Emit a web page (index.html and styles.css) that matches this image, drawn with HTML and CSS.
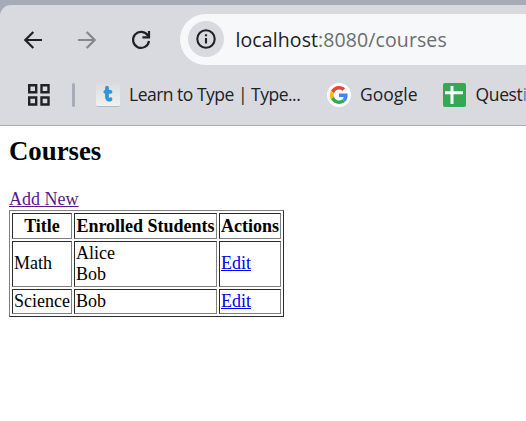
FILE: index.html
```html
<!DOCTYPE html>
<html lang="en">
<head>
<meta charset="utf-8">
<title>Courses</title>
<link rel="stylesheet" href="styles.css">
</head>
<body>
<header class="browser">
  <div class="toolbar">
    <svg class="nav back" viewBox="0 0 18 18"><path d="M18 9H1.5M9.3 1 1.3 9l8 8"/></svg>
    <svg class="nav forward" viewBox="0 0 18 18"><path d="M0 9h16.5M8.7 1l8 8-8 8"/></svg>
    <svg class="nav reload" viewBox="0 0 18 18"><path d="M15.9 4.7A8 8 0 1 0 17 10M17 0v6.3h-6.6"/></svg>
    <div class="address">
      <span class="info"><svg viewBox="0 0 20 20"><circle cx="10" cy="10" r="8.7"/><path d="M10 9v5.5M10 5.3v2"/></svg></span>
      <span class="url">localhost<span class="path">:8080/courses</span></span>
    </div>
  </div>
  <nav class="bookmarks">
    <svg class="apps" viewBox="0 0 22 22"><path d="M1.2 1.2h7v7h-7zM13.5 1.2h7v7h-7zM1.2 13.5h7v7h-7zM13.5 13.5h7v7h-7z"/></svg>
    <span class="divider"></span>
    <span class="typing"><svg viewBox="0 0 24 24"><path d="M11 4.7v9.6q0 3 3.5 2M9.3 8.8h5.2"/></svg></span>
    <span class="label learn">Learn to Type | Type...</span>
    <span class="google"><svg viewBox="0 0 48 48"><path fill="#ea4335" d="M24 9.5c3.5 0 6.7 1.2 9.2 3.6l6.9-6.9C35.9 2.4 30.5 0 24 0 14.6 0 6.5 5.4 2.6 13.2l8 6.2C12.4 13.7 17.7 9.5 24 9.5z"/><path fill="#4285f4" d="M47 24.6c0-1.6-.2-3.1-.4-4.6H24v9h12.9c-.6 3-2.2 5.5-4.7 7.2l7.7 6C44.4 38 47 31.8 47 24.6z"/><path fill="#fbbc05" d="M10.5 28.6a14.5 14.5 0 0 1 0-9.2l-8-6.2a24 24 0 0 0 0 21.6z"/><path fill="#34a853" d="M24 48c6.5 0 11.9-2.1 15.9-5.8l-7.7-6A14.5 14.5 0 0 1 10.5 28.6l-8 6.2C6.5 42.6 14.6 48 24 48z"/></svg></span>
    <span class="label goog">Google</span>
    <svg class="sheet" viewBox="0 0 23 24"><rect width="23" height="24" rx="2" fill="#34a853"/><path d="M9 3v18M2 9.8h18" stroke="#fff" stroke-width="3"/></svg>
    <span class="label quest">Quest<span class="edge">i</span></span>
  </nav>
</header>
<main>
  <h1>Courses</h1>
  <a class="visited" href="#">Add New</a>
  <table>
    <colgroup><col class="c1"><col class="c2"><col class="c3"></colgroup>
    <tr class="head"><th>Title</th><th>Enrolled Students</th><th>Actions</th></tr>
    <tr class="double"><td>Math</td><td>Alice<br>Bob</td><td><a href="#">Edit</a></td></tr>
    <tr class="single"><td>Science</td><td>Bob</td><td><a href="#">Edit</a></td></tr>
  </table>
</main>
</body>
</html>
```
FILE: styles.css
```css
* { box-sizing: border-box; }
body { margin: 0; width: 526px; height: 421px; overflow: hidden; background: #fff; }
svg { display: block; flex: none; }
.browser {
  height: 126px;
  padding-top: 5px;
  background: linear-gradient(#a6abb8 20px, #d9dae0 20px);
  border-bottom: 1px solid #aeafb6;
  font-family: "Open Sans", "Noto Sans", sans-serif;
  color: #202124;
}
.toolbar {
  display: flex;
  align-items: center;
  height: 70px;
  padding-left: 24px;
  background: #d9dae0;
  border-top-left-radius: 11px;
}
.nav { width: 18px; height: 18px; fill: none; stroke: #202124; stroke-width: 2.2; overflow: visible; }
.forward { margin-left: 36px; stroke: #85878c; }
.reload { margin-left: 36px; }
.address {
  display: flex;
  align-items: center;
  flex: 1;
  height: 51px;
  margin: 0 0 2px 30px;
  padding-left: 8px;
  border-radius: 26px 0 0 26px;
  background: #f6f8fa;
}
.info { display: flex; align-items: center; justify-content: center; width: 36px; height: 36px; border-radius: 50%; background: #d9dae0; }
.info svg { width: 20px; height: 20px; fill: none; stroke: #202124; stroke-width: 2.1; }
.url { margin-left: 11.5px; font-size: 19.5px; white-space: nowrap; letter-spacing: 0.1px; }
.path { color: #6b6d70; }
.bookmarks { display: flex; align-items: center; height: 40px; padding-left: 28px; background: #d9dae0; white-space: nowrap; }
.apps { width: 22px; height: 22px; fill: none; stroke: #202124; stroke-width: 2.4; }
.divider { flex: none; width: 3px; height: 24px; margin-left: 22px; border-radius: 2px; background: #a7acba; }
.typing { flex: none; width: 24px; height: 24px; margin-left: 21px; border-radius: 2px; background: linear-gradient(#dcdcdc, #f1f1f1); border-bottom: 1px solid #b9b9bb; }
.typing svg { width: 24px; height: 24px; fill: none; stroke: #2f96dc; stroke-width: 3.8; stroke-linecap: round; stroke-linejoin: round; }
.label { flex: none; padding-bottom: 2px; font-size: 17.5px; }
.learn { width: 172px; margin-left: 9px; letter-spacing: -0.5px; }
.google { display: flex; flex: none; align-items: center; justify-content: center; width: 24px; height: 24px; margin-left: 26px; border-radius: 50%; background: #fff; }
.google svg { width: 18px; height: 18px; }
.goog { width: 58px; margin-left: 9px; }
.sheet { width: 23px; height: 24px; margin-left: 25px; }
.quest { margin-left: 9.5px; letter-spacing: -0.35px; }
.edge { color: #3d8ddb; }
main { padding: 10px 9px; font: 18px/21px "Liberation Serif", serif; color: #000; }
h1 { margin: 0 0 23px; font-size: 26.8px; line-height: 30px; }
main a { color: #0000ee; }
main a.visited { display: block; width: max-content; color: #551a8b; }
table { width: 275px; height: 107px; table-layout: fixed; border: 1px solid; border-color: #808080 #2c2c2c #2c2c2c #808080; border-spacing: 2px; }
.c1 { width: 60px; }
.c2 { width: 143px; }
.c3 { width: 62px; }
th, td { padding: 1px; border: 1px solid; border-color: #2c2c2c #808080 #808080 #2c2c2c; white-space: nowrap; }
.head { height: 26px; }
.double { height: 46px; }
.single { height: 25px; }
.double td { padding: 0 1px 1px; }
```
